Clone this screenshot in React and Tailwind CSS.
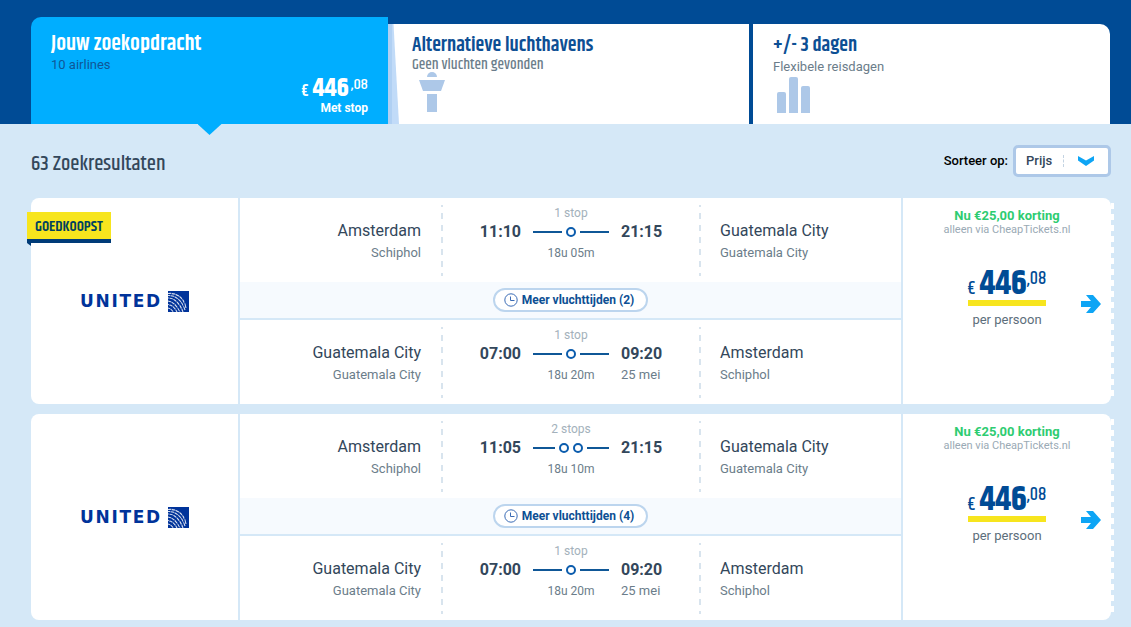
const flights = [
  {
    id: 1,
    cheapest: true,
    more: 2,
    legs: [
      { from: 'Amsterdam', fromAirport: 'Schiphol', to: 'Guatemala City', toAirport: 'Guatemala City', departure: '11:10', arrival: '21:15', stops: 1, duration: '18u 05m' },
      { from: 'Guatemala City', fromAirport: 'Guatemala City', to: 'Amsterdam', toAirport: 'Schiphol', departure: '07:00', arrival: '09:20', stops: 1, duration: '18u 20m', arrivalDate: '25 mei' },
    ],
  },
  {
    id: 2,
    cheapest: false,
    more: 4,
    legs: [
      { from: 'Amsterdam', fromAirport: 'Schiphol', to: 'Guatemala City', toAirport: 'Guatemala City', departure: '11:05', arrival: '21:15', stops: 2, duration: '18u 10m' },
      { from: 'Guatemala City', fromAirport: 'Guatemala City', to: 'Amsterdam', toAirport: 'Schiphol', departure: '07:00', arrival: '09:20', stops: 1, duration: '18u 20m', arrivalDate: '25 mei' },
    ],
  },
]

function TowerIcon() {
  return (
    <svg width="26" height="40" viewBox="0 0 26 40" fill="#adc8e8" className="ml-[7px]" aria-hidden="true">
      <path d="M8 5a5 5 0 0 1 10 0z" />
      <path d="M0 8h26l-4 11H4z" />
      <path d="M8 22h10v18H8z" />
    </svg>
  )
}

function BarsIcon() {
  return (
    <svg width="34" height="36" viewBox="0 0 34 36" fill="#adc8e8" className="ml-1" aria-hidden="true">
      <path d="M0 36V17a2 2 0 0 1 2-2h5a2 2 0 0 1 2 2v19z" />
      <path d="M12 36V2a2 2 0 0 1 2-2h5a2 2 0 0 1 2 2v34z" />
      <path d="M24 36V11a2 2 0 0 1 2-2h5a2 2 0 0 1 2 2v25z" />
    </svg>
  )
}

function Tabs() {
  return (
    <header className="bg-[#004b95] pr-[21px] pl-[31px]">
      <nav className="flex h-[124px] items-end gap-1 font-[Khand,'Roboto_Condensed',sans-serif]">
        <button type="button" className="relative flex h-[107px] flex-1 flex-col rounded-tl-[10px] bg-[#00aeff] px-5 pt-[15px] text-left">
          <span className="text-[22px] leading-[24px] font-semibold text-white">Jouw zoekopdracht</span>
          <span className="font-[Roboto,sans-serif] text-[13px] leading-[18px] text-[#0f5797]">10 airlines</span>
          <span className="flex h-[27px] items-start justify-end text-white">
            <span className="mt-[9px] text-[16px] leading-[18px] font-semibold">€</span>
            <span className="ml-1 text-[26px] leading-[30px] font-bold">446</span>
            <span className="ml-[2px] text-[16px] leading-[22px] font-medium">,08</span>
          </span>
          <span className="text-right font-[Roboto,sans-serif] text-[12px] leading-[14px] font-bold text-white">Met stop</span>
          <span className="absolute top-full left-1/2 h-[11px] w-6 -translate-x-1/2 bg-[#00aeff] [clip-path:polygon(0_0,100%_0,50%_100%)]" />
        </button>
        <button type="button" className="relative flex h-[100px] flex-1 flex-col bg-white px-5 pt-[10px] text-left">
          <span className="absolute top-0 -left-1 h-full w-[11px] bg-[#c1dbf8] [clip-path:polygon(0_0,50%_0,100%_100%,0_100%)]" />
          <span className="absolute top-0 -left-1 h-full w-1 bg-[#b0d0f3]" />
          <span className="text-[20px] leading-[24px] font-semibold text-[#0d4f94]">Alternatieve luchthavens</span>
          <span className="text-[15px] leading-[14px] font-medium text-[#6b7d8a]">Geen vluchten gevonden</span>
          <TowerIcon />
        </button>
        <button type="button" className="flex h-[100px] flex-1 flex-col rounded-tr-[10px] bg-white px-5 pt-[10px] text-left">
          <span className="text-[20px] leading-[24px] font-semibold text-[#0d4f94]">+/- 3 dagen</span>
          <span className="mb-[2px] font-[Roboto,sans-serif] text-[13px] leading-[17px] text-[#6b7d8a]">Flexibele reisdagen</span>
          <BarsIcon />
        </button>
      </nav>
    </header>
  )
}

function SortBar() {
  return (
    <div className="flex h-[74px] items-center justify-between">
      <h1 className="pt-[6px] font-[Khand,'Roboto_Condensed',sans-serif] text-[21px] leading-[28px] font-medium text-[#33475b]">63 Zoekresultaten</h1>
      <div className="flex items-center gap-[5px]">
        <label htmlFor="sort" className="text-[13px] font-medium text-black">Sorteer op:</label>
        <div className="relative">
          <select id="sort" className="h-8 w-[98px] appearance-none rounded-[5px] border-[3px] border-[#adc8e8] bg-white pl-[10px] text-[13px] font-medium text-[#33475b]">
            <option>Prijs</option>
          </select>
          <span className="pointer-events-none absolute top-[10px] right-[47px] h-3 border-l border-dashed border-[#c3d3e2]" />
          <svg width="16" height="10" viewBox="0 0 16 10" fill="#0ea5f5" className="pointer-events-none absolute top-[11px] right-[17px]" aria-hidden="true">
            <path d="M0 0l8 4.500L16 0v4.500L8 10 0 4.500z" />
          </svg>
        </div>
      </div>
    </div>
  )
}

function UnitedLogo() {
  return (
    <div className="flex items-center gap-[6px]" role="img" aria-label="United">
      <span className="font-['DejaVu_Sans',sans-serif] text-[17px] leading-[21px] font-bold tracking-widest text-[#00339a]">UNITED</span>
      <svg width="21" height="21" viewBox="0 0 21 21" fill="none" aria-hidden="true">
        <path fill="#00339a" d="M0 0h21v21H0z" />
        <g stroke="#fff" strokeWidth="1.100" opacity=".85">
          <path d="M0 2.500C8 1.500 16 6 18 17" />
          <path d="M0 4.500C7 4 14 9 17 19" />
          <path d="M0 7C6 7 12 12 15 21" />
          <path d="M0 10C5 10.500 9 15 12 21" />
          <path d="M0 13.500C4 14 7 17 9 21" />
          <path d="M0 17c3 .5 4 2 5.500 4" />
        </g>
        <g stroke="#00339a" strokeWidth=".7">
          <path d="M4 0C3 5 1 8 0 9" />
          <path d="M8 1C6 8 3 12 0 15" />
          <path d="M12 3C10 10 5 16 0 20" />
          <path d="M15 6C13 13 9 18 5 21" />
          <path d="M17 10c-1 5-4 9-6 11" />
        </g>
      </svg>
    </div>
  )
}

function Dashes() {
  return (
    <span className="mt-[7px] h-[71px] w-[2px] bg-[repeating-linear-gradient(#d8e4ee_0_2px,transparent_2px_8px,#d8e4ee_8px_12px)]" />
  )
}

function Route({ stops }) {
  return (
    <span className="col-start-2 row-start-2 flex items-center gap-1">
      <span className="h-[2px] flex-1 bg-[#0f5797]" />
      {Array.from({ length: stops }, (_, i) => (
        <span key={i} className="size-[10px] rounded-full border-2 border-[#0b5cad]" />
      ))}
      <span className="h-[2px] flex-1 bg-[#0f5797]" />
    </span>
  )
}

function Leg({ leg }) {
  return (
    <div className="flex h-[84px]">
      <div className="flex-1 pt-[23px] pr-5 text-right">
        <p className="text-[16px] leading-5 text-[#33475b]">{leg.from}</p>
        <p className="mt-[2px] text-[13px] leading-5 text-[#6b7d8a]">{leg.fromAirport}</p>
      </div>
      <Dashes />
      <div className="grid w-[256px] grid-cols-[1fr_76px_1fr] grid-rows-[16px_22px_20px] content-start gap-x-3 pt-[7px]">
        <span className="col-start-2 row-start-1 text-center text-[12px] leading-4 text-[#a3b1bb]">
          {leg.stops} {leg.stops === 1 ? 'stop' : 'stops'}
        </span>
        <span className="col-start-1 row-start-2 text-right text-[16px] leading-[22px] font-bold text-[#33475b]">{leg.departure}</span>
        <Route stops={leg.stops} />
        <span className="col-start-3 row-start-2 text-[16px] leading-[22px] font-bold text-[#33475b]">{leg.arrival}</span>
        <span className="col-start-2 row-start-3 text-center text-[12px] leading-5 text-[#6b7d8a]">{leg.duration}</span>
        <span className="col-start-3 row-start-3 text-[13px] leading-5 text-[#6b7d8a]">{leg.arrivalDate}</span>
      </div>
      <Dashes />
      <div className="flex-1 pt-[23px] pl-[19px]">
        <p className="text-[16px] leading-5 text-[#33475b]">{leg.to}</p>
        <p className="mt-[2px] text-[13px] leading-5 text-[#6b7d8a]">{leg.toAirport}</p>
      </div>
    </div>
  )
}

function FlightCard({ flight }) {
  return (
    <article className="relative flex">
      <div className="flex flex-1 gap-[2px]">
        <div className="flex w-[207px] items-center justify-center rounded-l-[8px] bg-white">
          <UnitedLogo />
        </div>

        <div className="flex-1 bg-white">
          <Leg leg={flight.legs[0]} />
          <div className="flex h-[38px] items-center justify-center border-b-2 border-[#d5e8f7] bg-[#f6fafe]">
            <button type="button" className="flex h-6 items-center gap-1 rounded-full border-2 border-[#bcd5ee] bg-white pr-3 pl-[9px] text-[12px] font-bold text-[#0d4f94]">
              <svg width="14" height="14" viewBox="0 0 14 14" fill="none" stroke="#3a6bb5" aria-hidden="true">
                <circle cx="7" cy="7" r="6.200" />
                <path d="M6.500 3.500V7.500h4" />
              </svg>
              Meer vluchttijden ({flight.more})
            </button>
          </div>
          <Leg leg={flight.legs[1]} />
        </div>

        <div className="relative flex w-[208px] flex-col items-center rounded-r-[8px] bg-white pt-[10px]">
          <p className="text-[13px] leading-4 font-bold text-[#2ecc71]">Nu €25,00 korting</p>
          <p className="text-[11px] leading-3 text-[#9aaab5]">alleen via CheapTickets.nl</p>
          <p className="mt-[30px] flex h-10 items-start border-b-6 border-[#f7e51e] font-[Khand,'Roboto_Condensed',sans-serif] text-[#004b95]">
            <span className="mt-[13px] text-[18px] leading-5 font-medium">€</span>
            <span className="ml-1 text-[34px] leading-[36px] font-bold">446</span>
            <span className="text-[18px] leading-[26px] font-medium">,08</span>
          </p>
          <p className="mt-1 text-[13px] leading-5 text-[#5c6e7b]">per persoon</p>
          <a href="#flight" aria-label="Bekijk vlucht" className="absolute top-[97px] right-[10px]">
            <svg width="20" height="18" viewBox="0 0 20 18" fill="#0ea5f5" aria-hidden="true">
              <path d="M5 0h7l8 9-8 9H5l5-6H0V6h10z" />
            </svg>
          </a>
        </div>
      </div>
      <span className="my-[5px] -mr-[3px] w-[3px] bg-[repeating-linear-gradient(white_0_6px,transparent_6px_11px)]" />

      {flight.cheapest && (
        <div className="absolute top-[14px] -left-1">
          <span className="block border-b-4 border-[#003b78] bg-[#f7e51e] px-2 pt-[2px] font-[Khand,'Roboto_Condensed',sans-serif] text-[15px] leading-[25px] font-semibold text-[#00415f]">GOEDKOOPST</span>
          <span className="block h-[3px] w-1 bg-[#003b78] [clip-path:polygon(0_0,100%_0,100%_100%)]" />
        </div>
      )}
    </article>
  )
}

export default function App() {
  return (
    <div className="min-h-screen bg-[#d5e8f7] font-[Roboto,sans-serif]">
      <Tabs />
      <main className="pr-5 pb-[7px] pl-[31px]">
        <SortBar />
        <div className="flex flex-col gap-[10px]">
          {flights.map((flight) => (
            <FlightCard key={flight.id} flight={flight} />
          ))}
        </div>
      </main>
    </div>
  )
}
